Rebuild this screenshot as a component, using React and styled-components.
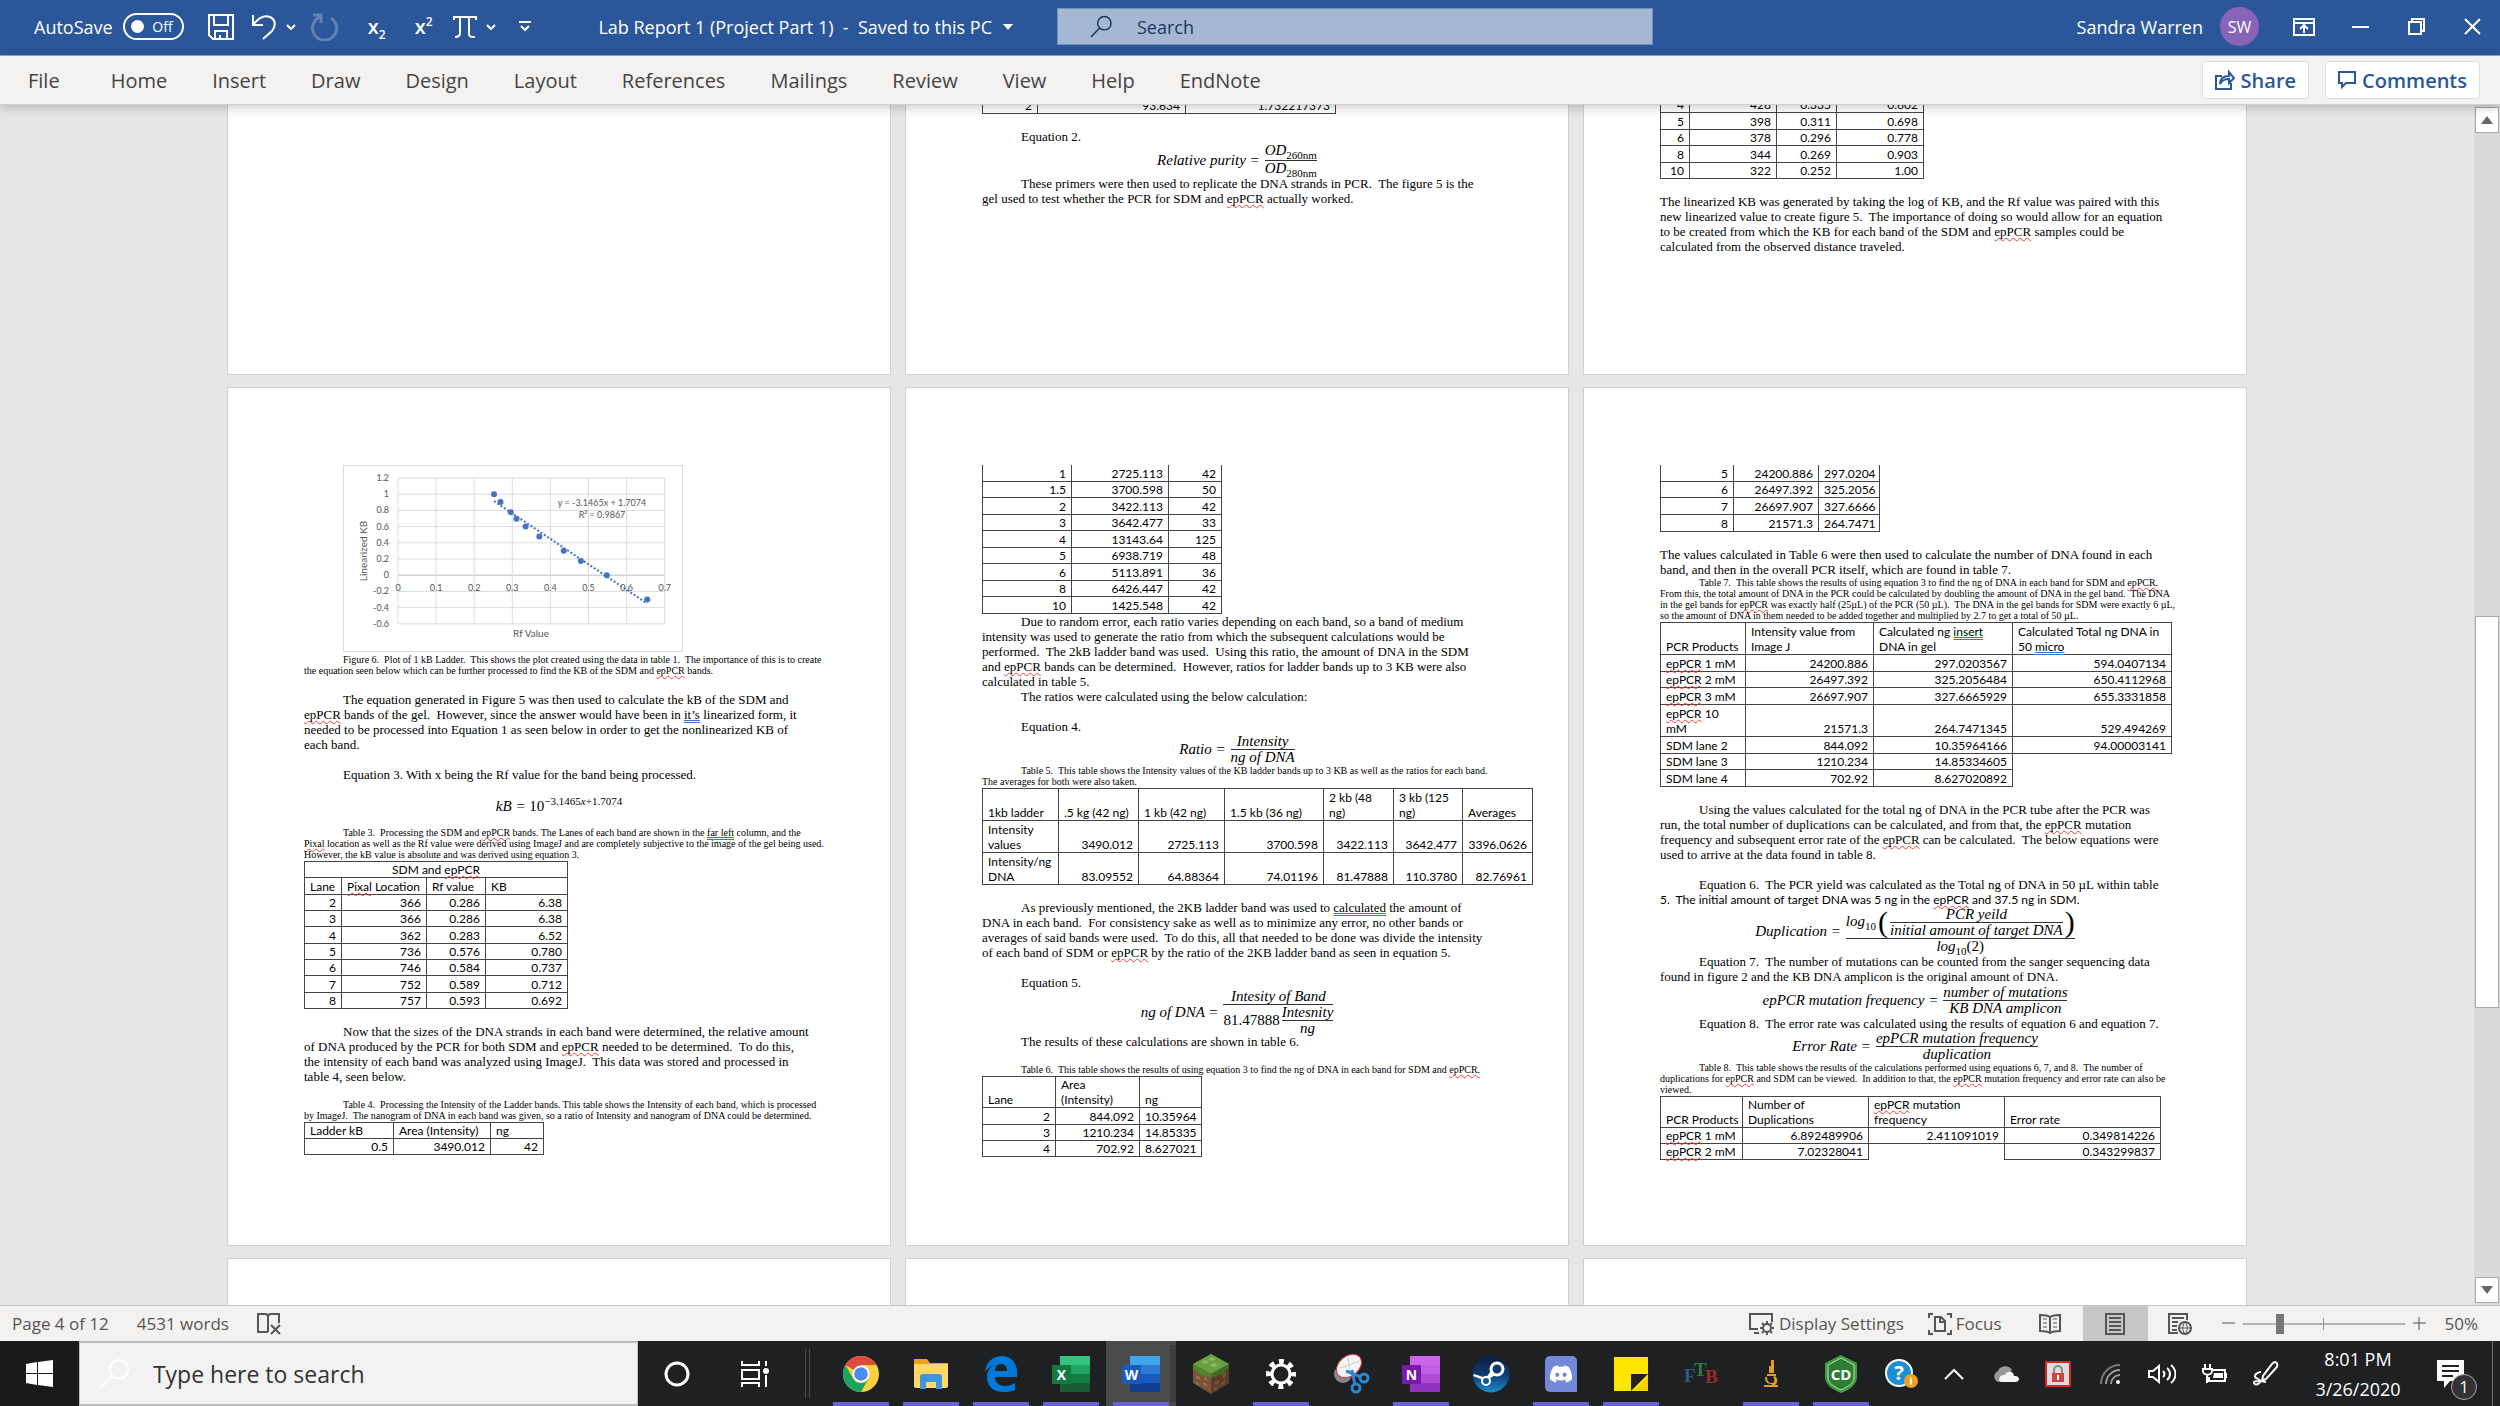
import React, { useState } from "react";
import styled, { createGlobalStyle, css } from "styled-components";
import { FaDiscord } from "react-icons/fa";

const uiFont = `"Open Sans", "Noto Sans", sans-serif`;
const docFont = `"Liberation Serif", serif`;
const tableFont = `Lato, "Open Sans", sans-serif`;

const GlobalStyle = createGlobalStyle`
  * { box-sizing: border-box; }
  body { margin: 0; overflow: hidden; font-family: ${uiFont}; }
  button { font: inherit; color: inherit; border: 0; background: none; padding: 0; cursor: pointer; }
  svg { display: block; }
`;

const Screen = styled.div`
  height: 100vh;
  display: flex;
  flex-direction: column;
`;

/* ---------- title bar ---------- */

const TitleBar = styled.header`
  display: grid;
  grid-template-columns: 1057fr 596fr 847fr;
  align-items: center;
  height: 56px;
  flex: none;
  padding-bottom: 2px;
  background: #2b579a;
  border-bottom: 1px solid #8fa9d2;
  color: #fff;
  font-size: 18px;
`;

const QuickAccess = styled.div`
  display: flex;
  align-items: center;
  height: 100%;
  padding: 0 44px 0 34px;
  white-space: nowrap;
`;

const AutoSave = styled.label`
  display: flex;
  align-items: center;
  gap: 10px;
  margin-right: 14px;
`;

const Pill = styled.span`
  display: flex;
  align-items: center;
  justify-content: space-between;
  width: 61px;
  height: 27px;
  padding: 0 9px 0 6px;
  border: 2px solid #fff;
  border-radius: 14px;
  font-size: 14px;
`;

const Knob = styled.input`
  appearance: none;
  width: 13px;
  height: 13px;
  margin: 0;
  border-radius: 50%;
  background: #fff;
`;

const ToolButton = styled.button`
  display: flex;
  align-items: center;
  justify-content: center;
  width: ${(p) => p.$w}px;
  height: 100%;
  opacity: ${(p) => (p.disabled ? 0.25 : 1)};
  font-size: 20px;
  font-weight: 600;
  sub, sup {
    font-size: 12px;
    line-height: 12px;
  }
`;

const DocTitle = styled.button`
  display: flex;
  align-items: center;
  gap: 11px;
  margin-left: auto;
  white-space: pre;
`;

const SearchBox = styled.label`
  display: flex;
  align-items: center;
  gap: 22px;
  height: 37px;
  padding-left: 32px;
  background: #a5b8d3;
  border: 1px solid #6f8fc0;
  color: #1c3762;
  input {
    flex: 1;
    min-width: 0;
    border: 0;
    outline: 0;
    background: none;
    font: 18px ${uiFont};
  }
  input::placeholder { color: #1c3762; opacity: 1; }
`;

const WindowArea = styled.div`
  display: flex;
  align-items: center;
  justify-content: flex-end;
  height: 100%;
`;

const Avatar = styled.span`
  display: flex;
  align-items: center;
  justify-content: center;
  width: 39px;
  height: 39px;
  margin: 0 17px;
  border-radius: 50%;
  background: #8764b8;
  font-size: 16px;
`;

/* ---------- ribbon ---------- */

const Ribbon = styled.nav`
  position: relative;
  z-index: 1;
  display: flex;
  align-items: center;
  gap: 45px;
  height: 49px;
  flex: none;
  padding: 0 20px 0 28px;
  background: #f3f2f1;
  border-bottom: 1px solid #d2d0ce;
  box-shadow: 0 2px 10px rgba(0, 0, 0, 0.22);
  color: #444;
  font-size: 20px;
`;

const RibbonActions = styled.div`
  display: flex;
  gap: 16px;
  margin-left: auto;
`;

const ActionButton = styled.button`
  display: flex;
  align-items: center;
  gap: 6px;
  height: 38px;
  padding: 0 12px;
  background: #fff;
  border: 1px solid #e1dfdd;
  border-radius: 3px;
  color: #2b579a;
  font-weight: 600;
`;

/* ---------- document ---------- */

const Workspace = styled.main`
  display: flex;
  flex: 1;
  min-height: 0;
  background: #e6e6e6;
`;

const Pages = styled.div`
  flex: 1;
  overflow: hidden;
  display: grid;
  grid-template-columns: repeat(3, 664px);
  grid-template-rows: 270px auto 1fr;
  gap: 12px 14px;
  justify-content: center;
`;

const Page = styled.article`
  display: flex;
  flex-direction: column;
  min-height: 0;
  padding: 77px 76px 0;
  background: #fff;
  border: 1px solid #d0d0d0;
  color: #000;
  font: 13px/15px ${docFont};
  ${(p) => p.$full && css`min-height: 859px;`}
  ${(p) => p.$end && css`
    justify-content: flex-end;
    overflow: hidden;
    border-top: 0;
    padding: 0 76px ${p.$end}px;
  `}
`;

const Text = styled.p`
  margin: ${(p) => (p.$space ? "15px 0 0" : 0)};
  text-indent: ${(p) => (p.$flush ? 0 : 39)}px;
  white-space: pre;
`;

const Caption = styled(Text)`
  font-size: 10px;
  line-height: 11px;
  padding-bottom: 1px;
`;

const CalibriLine = styled(Text)`
  font: 12px/16px ${tableFont};
`;

const Spelling = styled.span`
  text-decoration: underline wavy #f03a3a 1px;
  text-decoration-skip-ink: none;
  text-underline-offset: 1px;
`;

const Grammar = styled.span`
  text-decoration: underline double #3f6fd8 1px;
  text-decoration-skip-ink: none;
`;

// {word} is a spelling mark, [word] is a grammar mark
function rich(text) {
  return String(text)
    .split(/(\{[^}]*\}|\[[^\]]*\])/)
    .map((part, i) => {
      if (part[0] === "{") return <Spelling key={i}>{part.slice(1, -1)}</Spelling>;
      if (part[0] === "[") return <Grammar key={i}>{part.slice(1, -1)}</Grammar>;
      return part;
    });
}

const DataTable = styled.table`
  flex: none;
  table-layout: fixed;
  border-collapse: collapse;
  width: ${(p) => p.$w}px;
  height: ${(p) => p.$h}px;
  font: 12px/15px ${tableFont};
  td {
    padding: 0 5px;
    border: 1px solid #444;
    vertical-align: bottom;
    white-space: pre;
  }
  ${(p) => p.$open && css`tr:first-child td { border-top: 0; }`}
`;

const Cell = styled.td`
  text-align: ${(p) => p.$align};
  && { ${(p) => p.$blank && "border-bottom: 0;"} }
`;

function Grid({ cols, rows, height, open }) {
  return (
    <DataTable $w={cols.reduce((a, b) => a + b, 0)} $h={height} $open={open}>
      <colgroup>
        {cols.map((w, i) => (
          <col key={i} width={w} />
        ))}
      </colgroup>
      <tbody>
        {rows.map((row, r) => (
          <tr key={r}>
            {row.map((value, c) => (
              <Cell
                key={c}
                colSpan={row.length === 1 ? cols.length : 1}
                $blank={value === ""}
                $align={row.length === 1 ? "center" : /^[\d.]+$/.test(value) ? "right" : "left"}
              >
                {rich(value)}
              </Cell>
            ))}
          </tr>
        ))}
      </tbody>
    </DataTable>
  );
}

const Equation = styled.div`
  display: flex;
  align-items: center;
  justify-content: center;
  gap: 5px;
  height: ${(p) => p.$h}px;
  flex: none;
  font-size: 15px;
  line-height: 15px;
  font-style: italic;
  white-space: nowrap;
  sub, sup {
    font-size: 11px;
    line-height: 10px;
    font-style: normal;
  }
`;

const Fraction = styled.span`
  display: inline-flex;
  flex-direction: column;
  align-items: center;
  > :first-child { border-bottom: 1px solid #333; align-self: stretch; text-align: center; }
`;

const Row = styled.span`
  display: inline-flex;
  align-items: center;
  justify-content: center;
  gap: 2px;
`;

const Upright = styled.span`
  font-style: normal;
`;

const Paren = styled.span`
  font-size: 30px;
  line-height: 28px;
  font-style: normal;
`;

const ChartWrap = styled.div`
  flex: none;
  width: 340px;
  height: 187px;
  margin: 0 0 2px 39px;
  border: 1px solid #dcdcdc;
`;

const ladder = [
  [0.252, 1], [0.269, 0.903], [0.296, 0.778], [0.311, 0.698], [0.335, 0.602],
  [0.371, 0.477], [0.435, 0.301], [0.48, 0.176], [0.548, 0], [0.654, -0.301],
];
const px = (v) => 54 + v * 381;
const py = (v) => 12 + (1.2 - v) * 81;

function LadderChart() {
  const ys = [1.2, 1, 0.8, 0.6, 0.4, 0.2, 0, -0.2, -0.4, -0.6];
  const xs = [0, 0.1, 0.2, 0.3, 0.4, 0.5, 0.6, 0.7];
  return (
    <ChartWrap>
      <svg width="338" height="185" viewBox="0 0 338 185" fontFamily="Lato, sans-serif" fontSize="9" fill="#555">
        {ys.map((v) => (
          <g key={v}>
            <line x1={px(0)} x2={px(0.7)} y1={py(v)} y2={py(v)} stroke={v === 0 ? "#bbb" : "#ddd"} />
            <text x="45" y={py(v) + 3} textAnchor="end">{v}</text>
          </g>
        ))}
        {xs.map((v) => (
          <g key={v}>
            <line x1={px(v)} x2={px(v)} y1={py(1.2)} y2={py(-0.6)} stroke="#ddd" />
            <text x={px(v)} y="125" textAnchor="middle">{v}</text>
          </g>
        ))}
        <line
          x1={px(0.252)} y1={py(0.914)} x2={px(0.654)} y2={py(-0.35)}
          stroke="#4472c4" strokeWidth="2" strokeDasharray="2 2"
        />
        {ladder.map(([x, y]) => (
          <circle key={x} cx={px(x)} cy={py(y)} r="3" fill="#4472c4" />
        ))}
        <text x="258" y="40" textAnchor="middle">y = -3.1465x + 1.7074</text>
        <text x="258" y="52" textAnchor="middle">R² = 0.9867</text>
        <text x="187" y="171" textAnchor="middle" fontSize="10">Rf Value</text>
        <text x="23" y="85" textAnchor="middle" fontSize="10" transform="rotate(-90 23 85)">Linearized KB</text>
      </svg>
    </ChartWrap>
  );
}

/* ---------- scroll bar ---------- */

const ScrollBar = styled.div`
  display: flex;
  flex-direction: column;
  width: 26px;
  padding: 2px 1px;
  background: #dadada;
`;

const ScrollButton = styled.button`
  display: flex;
  align-items: center;
  justify-content: center;
  height: 26px;
  flex: none;
  background: #fff;
  border: 1px solid #ababab;
`;

const Track = styled.div`
  flex: ${(p) => p.$grow};
`;

const Thumb = styled(Track)`
  background: #fff;
  border: 1px solid #ababab;
`;

/* ---------- status bar ---------- */

const StatusBar = styled.footer`
  display: flex;
  align-items: center;
  height: 36px;
  flex: none;
  padding: 0 22px 0 12px;
  background: #f3f2f1;
  border-top: 1px solid #c8c6c4;
  color: #555;
  font-size: 17px;
`;

const StatusGroup = styled.div`
  display: flex;
  align-items: center;
  gap: ${(p) => p.$gap}px;
  height: 100%;
  margin-left: ${(p) => (p.$right ? "auto" : 0)};
`;

const StatusItem = styled.button`
  display: flex;
  align-items: center;
  gap: 4px;
`;

const ViewButtons = styled.div`
  display: flex;
  height: 100%;
  margin: 0 9px 0 16px;
`;

const ViewButton = styled.button`
  display: flex;
  align-items: center;
  justify-content: center;
  width: 65px;
  height: 100%;
  background: ${(p) => (p.$on ? "#c8c6c4" : "none")};
`;

const ZoomSlider = styled.input`
  appearance: none;
  width: 162px;
  height: 20px;
  margin: 0;
  background:
    linear-gradient(#999, #999) center / 1px 12px no-repeat,
    linear-gradient(#b5b3b1, #b5b3b1) center / 100% 2px no-repeat;
  &::-webkit-slider-thumb {
    appearance: none;
    width: 8px;
    height: 20px;
    background: #767676;
  }
`;

const ZoomLevel = styled.button`
  margin-left: 19px;
`;

/* ---------- task bar ---------- */

const TaskBar = styled.footer`
  display: flex;
  height: 65px;
  flex: none;
  background: #1e2022;
  color: #fff;
`;

const StartButton = styled.button`
  display: flex;
  align-items: center;
  justify-content: center;
  width: 79px;
  background: #1a1a1a;
`;

const TaskSearch = styled.label`
  display: flex;
  align-items: center;
  gap: 20px;
  width: 560px;
  padding-left: 19px;
  background: #f2f2f2;
  border: solid #bdbdbd;
  border-width: 2px 1px;
  input {
    flex: 1;
    min-width: 0;
    border: 0;
    outline: 0;
    background: none;
    font: 23px ${uiFont};
  }
  input::placeholder { color: #333; opacity: 1; }
`;

const TaskButton = styled.button`
  display: flex;
  align-items: center;
  justify-content: center;
  width: ${(p) => p.$w || 70}px;
  flex: none;
  ${(p) => p.$active && css`background: #4a4b4d; box-shadow: inset -6px 0 #3c3d3f;`}
  border-bottom: 4px solid transparent;
  border-top: 4px solid transparent;
  ${(p) => p.$open && css`
    border-image: linear-gradient(90deg, transparent 10%, #6b5fd3 10%, #6b5fd3 90%, transparent 90%) 0 0 4 0;
  `}
`;

const Divider = styled.span`
  width: 5px;
  height: 49px;
  margin: 8px 16px 0 11px;
  border: solid #4a4b4d;
  border-width: 0 1px;
`;

const Tray = styled.div`
  display: flex;
  margin-left: auto;
`;

const Clock = styled.time`
  display: flex;
  flex-direction: column;
  align-items: center;
  justify-content: center;
  width: 116px;
  padding-left: 16px;
  font-size: 18px;
  line-height: 30px;
`;

const Notifications = styled.button`
  position: relative;
  display: flex;
  align-items: center;
  justify-content: center;
  width: 84px;
`;

const Badge = styled.span`
  position: absolute;
  left: 43px;
  top: 33px;
  width: 26px;
  height: 26px;
  border: 1px solid #aaa;
  border-radius: 50%;
  background: #333;
  font-size: 16px;
  line-height: 24px;
`;

const ShowDesktop = styled.button`
  width: 8px;
  border-left: 1px solid #777;
`;

const Letter = ({ x, y, size, children, ...rest }) => (
  <text x={x} y={y} fontSize={size} textAnchor="middle" fontFamily="Open Sans, sans-serif" fontWeight="700" fill="#fff" {...rest}>
    {children}
  </text>
);

function Line({ w = 24, h = w, box, sw = 2, children }) {
  return (
    <svg width={w} height={h} viewBox={box || `0 0 ${w} ${h}`} fill="none" stroke="currentColor" strokeWidth={sw}>
      {children}
    </svg>
  );
}

const Chevron = () => (
  <Line w={10} h={6} sw={2}><path d="M1 1l4 4 4-4" /></Line>
);

const Magnifier = ({ size }) => (
  <Line w={size} box="0 0 24 24" sw={1.5}>
    <circle cx="15" cy="8.5" r="7" />
    <path d="M10 13.5L1 23" />
  </Line>
);

function OfficeIcon({ letter, light, mid, dark, deep, tile }) {
  return (
    <svg width="38" height="36" viewBox="0 0 38 36">
      <path d="M8 0h30v9H8z" fill={light} />
      <path d="M8 9h30v9H8z" fill={mid} />
      <path d="M8 18h30v9H8z" fill={dark} />
      <path d="M8 27h30v9H8z" fill={deep} />
      <rect y="9" width="19" height="19" rx="1" fill={tile} />
      <Letter x="9.5" y="24" size="14">{letter}</Letter>
    </svg>
  );
}

const ChromeIcon = () => (
  <svg width="36" height="36" viewBox="0 0 36 36">
    <circle cx="18" cy="18" r="18" fill="#fcd03f" />
    <path d="M18 18L2.4 9A18 18 0 0 1 33.6 9H18z" fill="#dd4b3e" />
    <path d="M2.4 9A18 18 0 0 0 18 36L25.8 22.5A9 9 0 0 1 10.2 22.5z" fill="#1da462" />
    <circle cx="18" cy="18" r="8.5" fill="#fff" />
    <circle cx="18" cy="18" r="6.8" fill="#4c8bf5" />
  </svg>
);

const FolderIcon = () => (
  <svg width="36" height="32" viewBox="0 0 36 32">
    <path d="M1 1h13l3 4h18v24H1z" fill="#e8a317" />
    <path d="M1 6h34v22a2 2 0 0 1-2 2H3a2 2 0 0 1-2-2z" fill="#ffd866" />
    <path d="M7 31V19a3 3 0 0 1 3-3h16a3 3 0 0 1 3 3v12h-6v-7H13v7z" fill="#3e96dc" />
  </svg>
);

const EdgeIcon = () => (
  <svg width="34" height="36" viewBox="0 0 34 36">
    <path
      d="M1 16C2 6 9 0 18 0c10 0 15 8 15 16v5H11c0 6 5 9 10 9 4 0 7-1 10-3v7c-3 1.5-7 2-11 2C9 36 3 30 3 21c0-6 3-10 8-13-5 2-8 5-10 8zM11 15h12c0-4-2-7-6-7s-6 3-6 7z"
      fill="#0078d7"
      fillRule="evenodd"
    />
  </svg>
);

const BlockIcon = () => (
  <svg width="38" height="40" viewBox="0 0 38 40">
    <path d="M19 0l18 10v19L19 40 1 29V10z" fill="#7a5238" />
    <path d="M19 20l18-10v19L19 40z" fill="#5b3c28" />
    <path d="M19 0l18 10-18 10L1 10z" fill="#6aa043" />
    <path d="M1 10l18 10v4l-4-3v3l-5-4v2L5 18v-1l-4-2z" fill="#4f8431" />
    <path d="M37 10L19 20v4l4-2v2l5-5v3l5-4v-1l4-2z" fill="#3f6d27" />
    <path d="M13 6l4 2-4 2-4-2zM22 9l4 2-4 2-4-2zM20 3l4 2-4 2-4-2z" fill="#86bd5a" />
    <path d="M4 21l4 2v3l-4-2zM11 28l4 2v3l-4-2zM12 23l3 1v3l-3-1zM4 27l3 2v3l-3-2z" fill="#9a6c4c" />
    <path d="M23 28l4-2v3l-4 2zM31 20l3-2v4l-3 2zM29 29l4-3v3l-4 3zM22 34l3-2v3l-3 2z" fill="#7b5338" />
  </svg>
);

const GearIcon = () => (
  <svg width="32" height="32" viewBox="0 0 32 32" fill="none" stroke="#fff">
    <circle cx="16" cy="16" r="9" strokeWidth="3" />
    <circle cx="16" cy="16" r="12.5" strokeWidth="5" strokeDasharray="4.9 4.917" strokeDashoffset="2.45" />
  </svg>
);

const SnipIcon = () => (
  <svg width="38" height="40" viewBox="0 0 38 40">
    <ellipse cx="11" cy="20" rx="9" ry="9" fill="#85878a" />
    <ellipse cx="17" cy="12" rx="14" ry="10" transform="rotate(-40 17 12)" fill="#f4f4f4" stroke="#c33" strokeWidth="1" />
    <path d="M8 14l20-7M18 20L16 3" stroke="#ccc" />
    <g fill="none" stroke="#2f86d0" strokeWidth="3">
      <path d="M14 17l15 6M20 16l3 15" />
      <circle cx="32" cy="24" r="4" />
      <circle cx="24" cy="34" r="4" />
    </g>
  </svg>
);

const SteamIcon = () => (
  <svg width="38" height="38" viewBox="0 0 38 38">
    <defs>
      <linearGradient id="steam" x1="0" y1="0" x2="0" y2="1">
        <stop offset="0" stopColor="#101c3c" />
        <stop offset=".5" stopColor="#0d3a72" />
        <stop offset="1" stopColor="#1b8cc8" />
      </linearGradient>
    </defs>
    <circle cx="19" cy="19" r="18.5" fill="url(#steam)" />
    <path d="M1 21l13 5 9-6 3-6-6 0-6 9-12-4z" fill="#fff" />
    <circle cx="25" cy="14" r="6" fill="#123a6e" stroke="#fff" strokeWidth="3" />
    <circle cx="14" cy="26" r="4" fill="#14579a" stroke="#fff" strokeWidth="2" />
  </svg>
);

const DiscordTile = styled.span`
  display: flex;
  align-items: center;
  justify-content: center;
  width: 32px;
  height: 36px;
  border-radius: 5px 5px 0 5px;
  background: #7289da;
`;

const StickyIcon = () => (
  <svg width="34" height="34" viewBox="0 0 34 34">
    <path d="M0 0h34v34H0z" fill="#ffe600" />
    <path d="M17 34V17h17z" fill="#222" />
    <path d="M20 34l14-14v14z" fill="#f5cf00" />
  </svg>
);

const FtbIcon = () => (
  <svg width="34" height="28" viewBox="0 0 34 28" fontFamily="Liberation Serif, serif" fontWeight="700" fontSize="19">
    <text x="0" y="22" fill="#2c5a86">F</text>
    <text x="10" y="16" fill="#2d7d3a">T</text>
    <text x="21" y="23" fill="#9a2b2b">B</text>
  </svg>
);

const MicroscopeIcon = () => (
  <svg width="20" height="28" viewBox="0 0 20 28" fill="#e0a01c">
    <path d="M10 0h3v13h-3zM8 6h4v7H8zM6 14h9v2H6zM4 17c0 6 3 7 7 7v1H3v2h14v-2h-3c3-2 3-7 0-9l-2 1c2 2 2 6-1 6s-5-2-5-6z" />
  </svg>
);

const ShieldIcon = () => (
  <svg width="34" height="38" viewBox="0 0 34 38">
    <path d="M17 0l16 8v14c0 8-8 13-16 16C9 35 1 30 1 22V8z" fill="#3f9b3f" />
    <path d="M17 3l13 7v12c0 7-7 10-13 13C11 32 4 29 4 22V10z" fill="#2d7d33" stroke="#b8e0b0" />
    <Letter x="17" y="25" size="15">CD</Letter>
  </svg>
);

const HelpIcon = () => (
  <svg width="34" height="30" viewBox="0 0 34 30">
    <circle cx="14" cy="14" r="13" fill="#1b8fd6" stroke="#fff" strokeWidth="2" />
    <Letter x="14" y="21" size="20">?</Letter>
    <circle cx="26" cy="22" r="7" fill="#f0a020" />
    <Letter x="26" y="26" size="11">i</Letter>
  </svg>
);

const CloudIcon = () => (
  <svg width="28" height="18" viewBox="0 0 28 18">
    <path d="M6 17a6 6 0 0 1 0-11 8 8 0 0 1 14-1l-10 12z" fill="#999" />
    <path d="M9 17C5 15 8 9 13 10c2-5 9-4 9 1 6-1 7 6 1 6z" fill="#f5f5f5" />
  </svg>
);

const LockIcon = () => (
  <svg width="26" height="26" viewBox="0 0 26 26">
    <path d="M1 1h24v24H1z" fill="#ddd" stroke="#d22" strokeWidth="2" />
    <path d="M9 12V9a4 4 0 0 1 8 0v3" fill="none" stroke="#888" strokeWidth="2" />
    <path d="M7 12h12v9H7z" fill="#c44" />
    <path d="M12 14h2v5h-2z" fill="#fff" />
  </svg>
);

const apps = [
  { name: "Chrome", open: true, icon: <ChromeIcon /> },
  { name: "File Explorer", open: true, icon: <FolderIcon /> },
  { name: "Edge", open: true, icon: <EdgeIcon /> },
  { name: "Excel", open: true, icon: <OfficeIcon letter="X" light="#33c481" mid="#21a366" dark="#107c41" deep="#185c37" tile="#107c41" /> },
  { name: "Word", open: true, active: true, icon: <OfficeIcon letter="W" light="#41a5ee" mid="#2b7cd3" dark="#185abd" deep="#103f91" tile="#185abd" /> },
  { name: "Minecraft", icon: <BlockIcon /> },
  { name: "Settings", open: true, icon: <GearIcon /> },
  { name: "Snipping Tool", icon: <SnipIcon /> },
  { name: "OneNote", open: true, icon: <OfficeIcon letter="N" light="#ca64ea" mid="#c25ee6" dark="#ae4bd5" deep="#9332bf" tile="#7719aa" /> },
  { name: "Steam", icon: <SteamIcon /> },
  { name: "Discord", open: true, icon: <DiscordTile><FaDiscord size={24} /></DiscordTile> },
  { name: "Sticky Notes", open: true, icon: <StickyIcon /> },
  { name: "FTB", icon: <FtbIcon /> },
  { name: "Microscope", open: true, icon: <MicroscopeIcon /> },
  { name: "ChemDraw", open: true, icon: <ShieldIcon /> },
];

const trayItems = [
  ["Help", <HelpIcon />],
  ["Hidden icons", <Line w={20} h={12} sw={2}><path d="M1 11l9-9 9 9" /></Line>],
  ["OneDrive", <CloudIcon />],
  ["Security", <LockIcon />],
  ["Wi-Fi", (
    <Line w={22} sw={2}>
      <path d="M2 21A19 19 0 0 1 21 2" stroke="#777" />
      <path d="M7 21A14 14 0 0 1 21 7M12 21a9 9 0 0 1 9-9" stroke="#999" />
      <circle cx="19" cy="19" r="2" fill="#fff" stroke="none" />
    </Line>
  )],
  ["Volume", (
    <Line w={28} h={20} sw={2}>
      <path d="M1 7h4l6-5v16l-6-5H1zM15 7c2 2 2 4 0 6M19 4c4 3 4 9 0 12M23 1c6 5 6 13 0 18" />
    </Line>
  )],
  ["Battery", (
    <Line w={27} h={22} sw={2}>
      <path d="M11 7h13v11H8v-4M25 10v5M4 1v5M9 1v5M2 6h9v2c0 5-9 5-9 0zM6 12v8" />
      <path d="M13 10h9v5H12z" fill="#fff" stroke="none" />
    </Line>
  )],
  ["Ink workspace", (
    <Line w={28} h={26} sw={2}>
      <path d="M23 1c3 1 3 4 1 6L14 18l-4 2 1-5L20 3c1-1 2-2 3-2zM9 11c-4 0-8 4-5 6 2 1 4 1 4 3 0 3-5 5-6 2s8-2 12-1" />
    </Line>
  )],
];

const tabs = ["Home", "Insert", "Draw", "Design", "Layout", "References", "Mailings", "Review", "View", "Help", "EndNote"];

const FileTab = styled.button`
  margin-right: 6px;
`;

function DocumentPages() {
  return (
    <Pages>
      <Page $end={120} />
      <Page $end={168}>
        <Grid cols={[55, 148, 150]} height={17} rows={[["2", "93.634", "1.732217373"]]} />
        <Text $space>Equation 2.</Text>
        <Equation $h={32}>
          Relative purity =
          <Fraction>
            <span>OD<sub>260nm</sub></span>
            <span>OD<sub>280nm</sub></span>
          </Fraction>
        </Equation>
        <Text>{rich("These primers were then used to replicate the DNA strands in PCR.  The figure 5 is the\ngel used to test whether the PCR for SDM and {epPCR} actually worked.")}</Text>
      </Page>
      <Page $end={120}>
        <Grid
          cols={[29, 87, 60, 87]}
          height={83}
          rows={[
            ["4", "428", "0.335", "0.602"],
            ["5", "398", "0.311", "0.698"],
            ["6", "378", "0.296", "0.778"],
            ["8", "344", "0.269", "0.903"],
            ["10", "322", "0.252", "1.00"],
          ]}
        />
        <Text $space $flush>{rich("The linearized KB was generated by taking the log of KB, and the Rf value was paired with this\nnew linearized value to create figure 5.  The importance of doing so would allow for an equation\nto be created from which the KB for each band of the SDM and {epPCR} samples could be\ncalculated from the observed distance traveled.")}</Text>
      </Page>

      <Page $full>
        <LadderChart />
        <Caption>{rich("Figure 6.  Plot of 1 kB Ladder.  This shows the plot created using the data in table 1.  The importance of this is to create\nthe equation seen below which can be further processed to find the KB of the SDM and {epPCR} bands.")}</Caption>
        <Text $space>{rich("The equation generated in Figure 5 was then used to calculate the kB of the SDM and\n{epPCR} bands of the gel.  However, since the answer would have been in [it’s] linearized form, it\nneeded to be processed into Equation 1 as seen below in order to get the nonlinearized KB of\neach band.")}</Text>
        <Text $space>Equation 3. With x being the Rf value for the band being processed.</Text>
        <Equation $h={45}>
          <span>kB = <Upright>10</Upright><sup>−3.1465<i>x</i>+1.7074</sup></span>
        </Equation>
        <Caption>{rich("Table 3.  Processing the SDM and {epPCR} bands. The Lanes of each band are shown in the [far left] column, and the\n{Pixal} location as well as the Rf value were derived using ImageJ and are completely subjective to the image of the gel being used.\nHowever, the kB value is absolute and was derived using equation 3.")}</Caption>
        <Grid
          cols={[37, 85, 59, 82]}
          height={148}
          rows={[
            ["SDM and {epPCR}"],
            ["Lane", "{Pixal} Location", "Rf value", "KB"],
            ["2", "366", "0.286", "6.38"],
            ["3", "366", "0.286", "6.38"],
            ["4", "362", "0.283", "6.52"],
            ["5", "736", "0.576", "0.780"],
            ["6", "746", "0.584", "0.737"],
            ["7", "752", "0.589", "0.712"],
            ["8", "757", "0.593", "0.692"],
          ]}
        />
        <Text $space>{rich("Now that the sizes of the DNA strands in each band were determined, the relative amount\nof DNA produced by the PCR for both SDM and {epPCR} needed to be determined.  To do this,\nthe intensity of each band was analyzed using ImageJ.  This data was stored and processed in\ntable 4, seen below.")}</Text>
        <Caption $space>{rich("Table 4.  Processing the Intensity of the Ladder bands. This table shows the Intensity of each band, which is processed\nby ImageJ.  The nanogram of DNA in each band was given, so a ratio of Intensity and nanogram of DNA could be determined.")}</Caption>
        <Grid cols={[89, 97, 53]} height={33} rows={[["Ladder kB", "Area (Intensity)", "ng"], ["0.5", "3490.012", "42"]]} />
      </Page>

      <Page $full>
        <Grid
          open
          cols={[89, 97, 53]}
          height={149}
          rows={[
            ["1", "2725.113", "42"],
            ["1.5", "3700.598", "50"],
            ["2", "3422.113", "42"],
            ["3", "3642.477", "33"],
            ["4", "13143.64", "125"],
            ["5", "6938.719", "48"],
            ["6", "5113.891", "36"],
            ["8", "6426.447", "42"],
            ["10", "1425.548", "42"],
          ]}
        />
        <Text>{rich("Due to random error, each ratio varies depending on each band, so a band of medium\nintensity was used to generate the ratio from which the subsequent calculations would be\nperformed.  The 2kB ladder band was used.  Using this ratio, the amount of DNA in the SDM\nand {epPCR} bands can be determined.  However, ratios for ladder bands up to 3 KB were also\ncalculated in table 5.")}</Text>
        <Text>The ratios were calculated using the below calculation:</Text>
        <Text $space>Equation 4.</Text>
        <Equation $h={31}>
          Ratio =
          <Fraction>
            <span>Intensity</span>
            <span>ng of DNA</span>
          </Fraction>
        </Equation>
        <Caption>{"Table 5.  This table shows the Intensity values of the KB ladder bands up to 3 KB as well as the ratios for each band.\nThe averages for both were also taken."}</Caption>
        <Grid
          cols={[76, 80, 86, 99, 70, 69, 70]}
          height={97}
          rows={[
            ["1kb ladder", ".5 kg (42 ng)", "1 kb (42 ng)", "1.5 kb (36 ng)", "2 kb (48\nng)", "3 kb (125\nng)", "Averages"],
            ["Intensity\nvalues", "3490.012", "2725.113", "3700.598", "3422.113", "3642.477", "3396.0626"],
            ["Intensity/ng\nDNA", "83.09552", "64.88364", "74.01196", "81.47888", "110.3780", "82.76961"],
          ]}
        />
        <Text $space>{rich("As previously mentioned, the 2KB ladder band was used to [calculated] the amount of\nDNA in each band.  For consistency sake as well as to minimize any error, no other bands or\naverages of said bands were used.  To do this, all that needed to be done was divide the intensity\nof each band of SDM or {epPCR} by the ratio of the 2KB ladder band as seen in equation 5.")}</Text>
        <Text $space>Equation 5.</Text>
        <Equation $h={44}>
          ng of DNA =
          <Fraction>
            <span>Intesity of Band</span>
            <Row>
              <Upright>81.47888</Upright>
              <Fraction>
                <span>Intesnity</span>
                <span>ng</span>
              </Fraction>
            </Row>
          </Fraction>
        </Equation>
        <Text>The results of these calculations are shown in table 6.</Text>
        <Caption $space>{rich("Table 6.  This table shows the results of using equation 3 to find the ng of DNA in each band for SDM and {epPCR.}")}</Caption>
        <Grid
          cols={[73, 84, 62]}
          height={81}
          rows={[
            ["Lane", "Area\n(Intensity)", "ng"],
            ["2", "844.092", "10.35964"],
            ["3", "1210.234", "14.85335"],
            ["4", "702.92", "8.627021"],
          ]}
        />
      </Page>

      <Page $full>
        <Grid
          open
          cols={[73, 85, 61]}
          height={67}
          rows={[
            ["5", "24200.886", "297.0204"],
            ["6", "26497.392", "325.2056"],
            ["7", "26697.907", "327.6666"],
            ["8", "21571.3", "264.7471"],
          ]}
        />
        <Text $space $flush>{"The values calculated in Table 6 were then used to calculate the number of DNA found in each\nband, and then in the overall PCR itself, which are found in table 7."}</Text>
        <Caption>{rich("Table 7.  This table shows the results of using equation 3 to find the ng of DNA in each band for SDM and {epPCR.}\nFrom this, the total amount of DNA in the PCR could be calculated by doubling the amount of DNA in the gel band.  The DNA\nin the gel bands for {epPCR} was exactly half (25µL) of the PCR (50 µL).  The DNA in the gel bands for SDM were exactly 6 µL,\nso the amount of DNA in them needed to be added together and multiplied by 2.7 to get a total of 50 µL.")}</Caption>
        <Grid
          cols={[85, 128, 139, 159]}
          height={165}
          rows={[
            ["PCR Products", "Intensity value from\nImage J", "Calculated ng [insert]\nDNA in gel", "Calculated Total ng DNA in\n50 [micro]"],
            ["{epPCR} 1 mM", "24200.886", "297.0203567", "594.0407134"],
            ["{epPCR} 2 mM", "26497.392", "325.2056484", "650.4112968"],
            ["{epPCR} 3 mM", "26697.907", "327.6665929", "655.3331858"],
            ["{epPCR} 10\nmM", "21571.3", "264.7471345", "529.494269"],
            ["SDM lane 2", "844.092", "10.35964166", "94.00003141"],
            ["SDM lane 3", "1210.234", "14.85334605"],
            ["SDM lane 4", "702.92", "8.627020892"],
          ]}
        />
        <Text $space>{rich("Using the values calculated for the total ng of DNA in the PCR tube after the PCR was\nrun, the total number of duplications can be calculated, and from that, the {epPCR} mutation\nfrequency and subsequent error rate of the {epPCR} can be calculated.  The below equations were\nused to arrive at the data found in table 8.")}</Text>
        <Text $space>{"Equation 6.  The PCR yield was calculated as the Total ng of DNA in 50 µL within table"}</Text>
        <CalibriLine $flush>{rich("5.  The initial amount of target DNA was 5 ng in the {epPCR} and 37.5 ng in SDM.")}</CalibriLine>
        <Equation $h={46}>
          Duplication =
          <Fraction>
            <Row>
              <span>log<sub>10</sub></span>
              <Paren>(</Paren>
              <Fraction>
                <span>PCR yeild</span>
                <span>initial amount of target DNA</span>
              </Fraction>
              <Paren>)</Paren>
            </Row>
            <span>log<sub>10</sub><Upright>(2)</Upright></span>
          </Fraction>
        </Equation>
        <Text>{"Equation 7.  The number of mutations can be counted from the sanger sequencing data\nfound in figure 2 and the KB DNA amplicon is the original amount of DNA."}</Text>
        <Equation $h={32}>
          epPCR mutation frequency =
          <Fraction>
            <span>number of mutations</span>
            <span>KB DNA amplicon</span>
          </Fraction>
        </Equation>
        <Text>{"Equation 8.  The error rate was calculated using the results of equation 6 and equation 7."}</Text>
        <Equation $h={31}>
          Error Rate =
          <Fraction>
            <span>epPCR mutation frequency</span>
            <span>duplication</span>
          </Fraction>
        </Equation>
        <Caption>{rich("Table 8.  This table shows the results of the calculations performed using equations 6, 7, and 8.  The number of\nduplications for {epPCR} and SDM can be viewed.  In addition to that, the {epPCR} mutation frequency and error rate can also be\nviewed.")}</Caption>
        <Grid
          cols={[82, 126, 136, 156]}
          height={61}
          rows={[
            ["PCR Products", "Number of\nDuplications", "{epPCR} mutation\nfrequency", "Error rate"],
            ["{epPCR} 1 mM", "6.892489906", "2.411091019", "0.349814226"],
            ["{epPCR} 2 mM", "7.02328041", "", "0.343299837"],
          ]}
        />
      </Page>

      <Page />
      <Page />
      <Page />
    </Pages>
  );
}

function App() {
  const [zoom, setZoom] = useState(22);

  return (
    <Screen>
      <GlobalStyle />
      <TitleBar>
        <QuickAccess>
          <AutoSave>
            AutoSave
            <Pill><Knob type="checkbox" />Off</Pill>
          </AutoSave>
          <ToolButton $w={46} aria-label="Save">
            <Line w={26} sw={2}><path d="M1 1h24v24H5l-4-4zM6 1v10h14V1M7 25v-8h12v8M12 25v-4" /></Line>
          </ToolButton>
          <ToolButton $w={40} aria-label="Undo">
            <Line w={26} sw={2}><path d="M2 1v10h10M2 11C8 3 14 1 19 3c6 3 6 9 2 14l-9 8" /></Line>
          </ToolButton>
          <ToolButton $w={14} aria-label="Undo list"><Chevron /></ToolButton>
          <ToolButton $w={54} aria-label="Redo" disabled>
            <Line w={28} sw={3}><path d="M2 2h8v8M9 4a12 12 0 1 0 11 1" /></Line>
          </ToolButton>
          <ToolButton $w={50} aria-label="Subscript"><span>x<sub>2</sub></span></ToolButton>
          <ToolButton $w={44} aria-label="Superscript"><span>x<sup>2</sup></span></ToolButton>
          <ToolButton $w={38} aria-label="Equation">
            <Line w={24} sw={2}><path d="M1 5V2h22v3M7 2v16c0 3-2 4-5 4M16 2v17c0 3 2 3 6 3" /></Line>
          </ToolButton>
          <ToolButton $w={14} aria-label="Equation list"><Chevron /></ToolButton>
          <ToolButton $w={54} aria-label="Customize">
            <Line w={12} h={11} sw={2}><path d="M0 1h12M2 5l4 4 4-4" /></Line>
          </ToolButton>
          <DocTitle>
            {"Lab Report 1 (Project Part 1)  -  Saved to this PC"}
            <svg width="10" height="6" viewBox="0 0 10 6" fill="#fff"><path d="M0 0h10L5 6z" /></svg>
          </DocTitle>
        </QuickAccess>
        <SearchBox>
          <Magnifier size={23} />
          <input placeholder="Search" aria-label="Search" />
        </SearchBox>
        <WindowArea>
          Sandra Warren
          <Avatar>SW</Avatar>
          <ToolButton $w={56} aria-label="Ribbon options">
            <Line w={22} h={18} sw={2}><path d="M1 1h20v16H1zM1 5h20M11 15V8M7 11l4-4 4 4" /></Line>
          </ToolButton>
          <ToolButton $w={56} aria-label="Minimize"><Line w={17} h={2}><path d="M0 1h17" /></Line></ToolButton>
          <ToolButton $w={56} aria-label="Restore">
            <Line w={17} sw={2}><path d="M1 4h12v12H1zM4 4V1h12v12h-3" /></Line>
          </ToolButton>
          <ToolButton $w={56} aria-label="Close"><Line w={17} sw={2}><path d="M1 1l15 15M16 1L1 16" /></Line></ToolButton>
        </WindowArea>
      </TitleBar>

      <Ribbon>
        <FileTab>File</FileTab>
        {tabs.map((tab) => (
          <button key={tab}>{tab}</button>
        ))}
        <RibbonActions>
          <ActionButton>
            <Line w={20} sw={2}><path d="M7 6H1v13h15v-6M5 14c0-6 4-8 9-8V2l5 6-5 5V9c-4 0-7 1-9 5z" /></Line>
            Share
          </ActionButton>
          <ActionButton>
            <Line w={18} h={18} sw={2}><path d="M1 1h16v11H8l-4 4v-4H1z" /></Line>
            Comments
          </ActionButton>
        </RibbonActions>
      </Ribbon>

      <Workspace>
        <DocumentPages />
        <ScrollBar>
          <ScrollButton aria-label="Scroll up">
            <svg width="12" height="8" viewBox="0 0 12 8" fill="#666"><path d="M0 8h12L6 0z" /></svg>
          </ScrollButton>
          <Track $grow={484} />
          <Thumb $grow={391} />
          <Track $grow={270} />
          <ScrollButton aria-label="Scroll down">
            <svg width="12" height="8" viewBox="0 0 12 8" fill="#666"><path d="M0 0h12L6 8z" /></svg>
          </ScrollButton>
        </ScrollBar>
      </Workspace>

      <StatusBar>
        <StatusGroup $gap={28}>
          <StatusItem>Page 4 of 12</StatusItem>
          <StatusItem>4531 words</StatusItem>
          <StatusItem aria-label="Proofing">
            <Line w={24} h={22} sw={2}><path d="M11 19H1V1h7c2 0 3 1 3 3v15M11 4c0-2 1-3 3-3h8v9M14 12l9 9M23 12l-9 9" /></Line>
          </StatusItem>
        </StatusGroup>
        <StatusGroup $gap={24} $right>
          <StatusItem>
            <Line w={26} h={22} sw={2}>
              <path d="M9 16H1V1h22v8M5 20h5" />
              <circle cx="18" cy="15" r="4" />
              <path d="M18 8v3M18 19v3M11 15h3M22 15h3M13 10l2 2M21 18l2 2M23 10l-2 2M15 18l-2 2" />
            </Line>
            Display Settings
          </StatusItem>
          <StatusItem>
            <Line w={24} h={22} sw={2}><path d="M5 1H1v4M19 1h4v4M5 21H1v-4M19 21h4v-4M7 4h6l4 4v10H7zM12 4v5h5" /></Line>
            Focus
          </StatusItem>
        </StatusGroup>
        <ViewButtons>
          <ViewButton aria-label="Read mode">
            <Line w={22} h={20} sw={2}>
              <path d="M11 3C8 1 4 1 1 1v16c3 0 7 0 10 2 3-2 7-2 10-2V1c-3 0-7 0-10 2zM11 3v16" />
              <path d="M4 5h4M4 9h4M4 13h4M14 5h4M14 9h4M14 13h4" strokeWidth="1" />
            </Line>
          </ViewButton>
          <ViewButton $on aria-label="Print layout">
            <Line w={20} h={22} sw={2}><path d="M1 1h18v20H1zM4 5h12M4 9h12M4 13h12M4 17h12" /></Line>
          </ViewButton>
          <ViewButton aria-label="Web layout">
            <Line w={24} h={22} sw={2}>
              <path d="M10 20H1V1h18v6M4 5h12M4 9h6M4 13h5M4 17h5" />
              <circle cx="17" cy="15" r="6" />
              <path d="M11 15h12M17 9c-3 4-3 8 0 12M17 9c3 4 3 8 0 12" strokeWidth="1" />
            </Line>
          </ViewButton>
        </ViewButtons>
        <StatusGroup $gap={8}>
          <StatusItem aria-label="Zoom out"><Line w={13} sw={1}><path d="M0 6h13" /></Line></StatusItem>
          <ZoomSlider
            type="range"
            aria-label="Zoom"
            value={zoom}
            onChange={(e) => setZoom(e.target.value)}
          />
          <StatusItem aria-label="Zoom in"><Line w={13} sw={1}><path d="M0 6h13M6 0v13" /></Line></StatusItem>
        </StatusGroup>
        <ZoomLevel>50%</ZoomLevel>
      </StatusBar>

      <TaskBar>
        <StartButton aria-label="Start">
          <svg width="27" height="27" viewBox="0 0 27 27" fill="#fff">
            <path d="M0 4l11-2v11H0zM12 2l15-2v13H12zM0 14h11v11L0 23zM12 14h15v13l-15-2z" />
          </svg>
        </StartButton>
        <TaskSearch>
          <Magnifier size={32} />
          <input placeholder="Type here to search" aria-label="Type here to search" />
        </TaskSearch>
        <TaskButton $w={78} aria-label="Cortana">
          <Line w={26} sw={3}><circle cx="13" cy="13" r="11" /></Line>
        </TaskButton>
        <TaskButton $w={78} aria-label="Task view">
          <Line w={28} h={26} sw={2}>
            <path d="M1 0v4h17V0M1 9h17v9H1zM1 26v-4h17v4M25 0v5M25 14v12" />
            <circle cx="25" cy="10" r="2" fill="#fff" />
          </Line>
        </TaskButton>
        <Divider />
        {apps.map((app) => (
          <TaskButton key={app.name} aria-label={app.name} $open={app.open} $active={app.active}>
            {app.icon}
          </TaskButton>
        ))}
        <Tray>
          {trayItems.map(([name, icon]) => (
            <TaskButton key={name} $w={52} aria-label={name}>{icon}</TaskButton>
          ))}
          <Clock>
            <span>8:01 PM</span>
            <span>3/26/2020</span>
          </Clock>
          <Notifications aria-label="Notifications">
            <svg width="27" height="28" viewBox="0 0 27 28">
              <path d="M0 0h27v21H13l-6 7v-7H0z" fill="#fff" />
              <path d="M5 6h17M5 11h17M5 16h11" stroke="#222" strokeWidth="2" />
            </svg>
            <Badge>1</Badge>
          </Notifications>
          <ShowDesktop aria-label="Show desktop" />
        </Tray>
      </TaskBar>
    </Screen>
  );
}

export default App;
